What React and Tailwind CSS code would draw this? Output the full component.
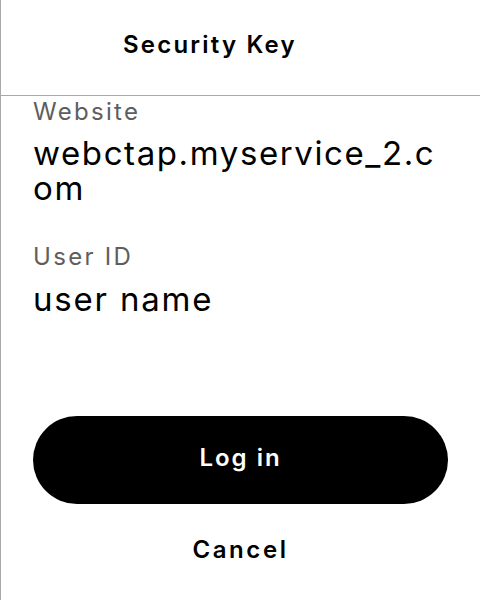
export default function App() {
  return (
    <div
      className="w-[480px] h-[600px] bg-white border-l border-[#a9a9a9] flex flex-col overflow-hidden"
      style={{ fontFamily: 'Inter, "Noto Sans", sans-serif' }}
    >
      <header className="h-[96px] shrink-0 border-b border-[#a9a9a9] flex items-center pl-[122px] pb-[5px]">
        <h1 className="text-[24px] font-semibold text-black leading-[32px] tracking-[2.2px]">Security Key</h1>
      </header>

      <div className="px-[32px]">
        <div className="text-[24px] leading-[32px] tracking-[2.3px] text-[#5e5e5e]">Website</div>
        <div className="mt-[8px] text-[33px] leading-[35px] tracking-[1.6px] text-black break-all">
          webctap.myservice_2.com
        </div>

        <div className="mt-[35px] text-[24px] leading-[32px] tracking-[2.3px] text-[#5e5e5e]">User ID</div>
        <div className="mt-[9px] text-[33px] leading-[35px] tracking-[1.8px] text-black">user name</div>
      </div>

      <div className="mt-[99px] px-[32px] flex flex-col items-center">
        <button className="w-full h-[88px] rounded-full bg-black text-white text-[24px] leading-[32px] font-semibold tracking-[2px] pb-[5px]">
          Log in
        </button>
        <button className="mt-[30px] text-[24px] leading-[32px] font-semibold tracking-[2.6px] text-black">
          Cancel
        </button>
      </div>
    </div>
  );
}
